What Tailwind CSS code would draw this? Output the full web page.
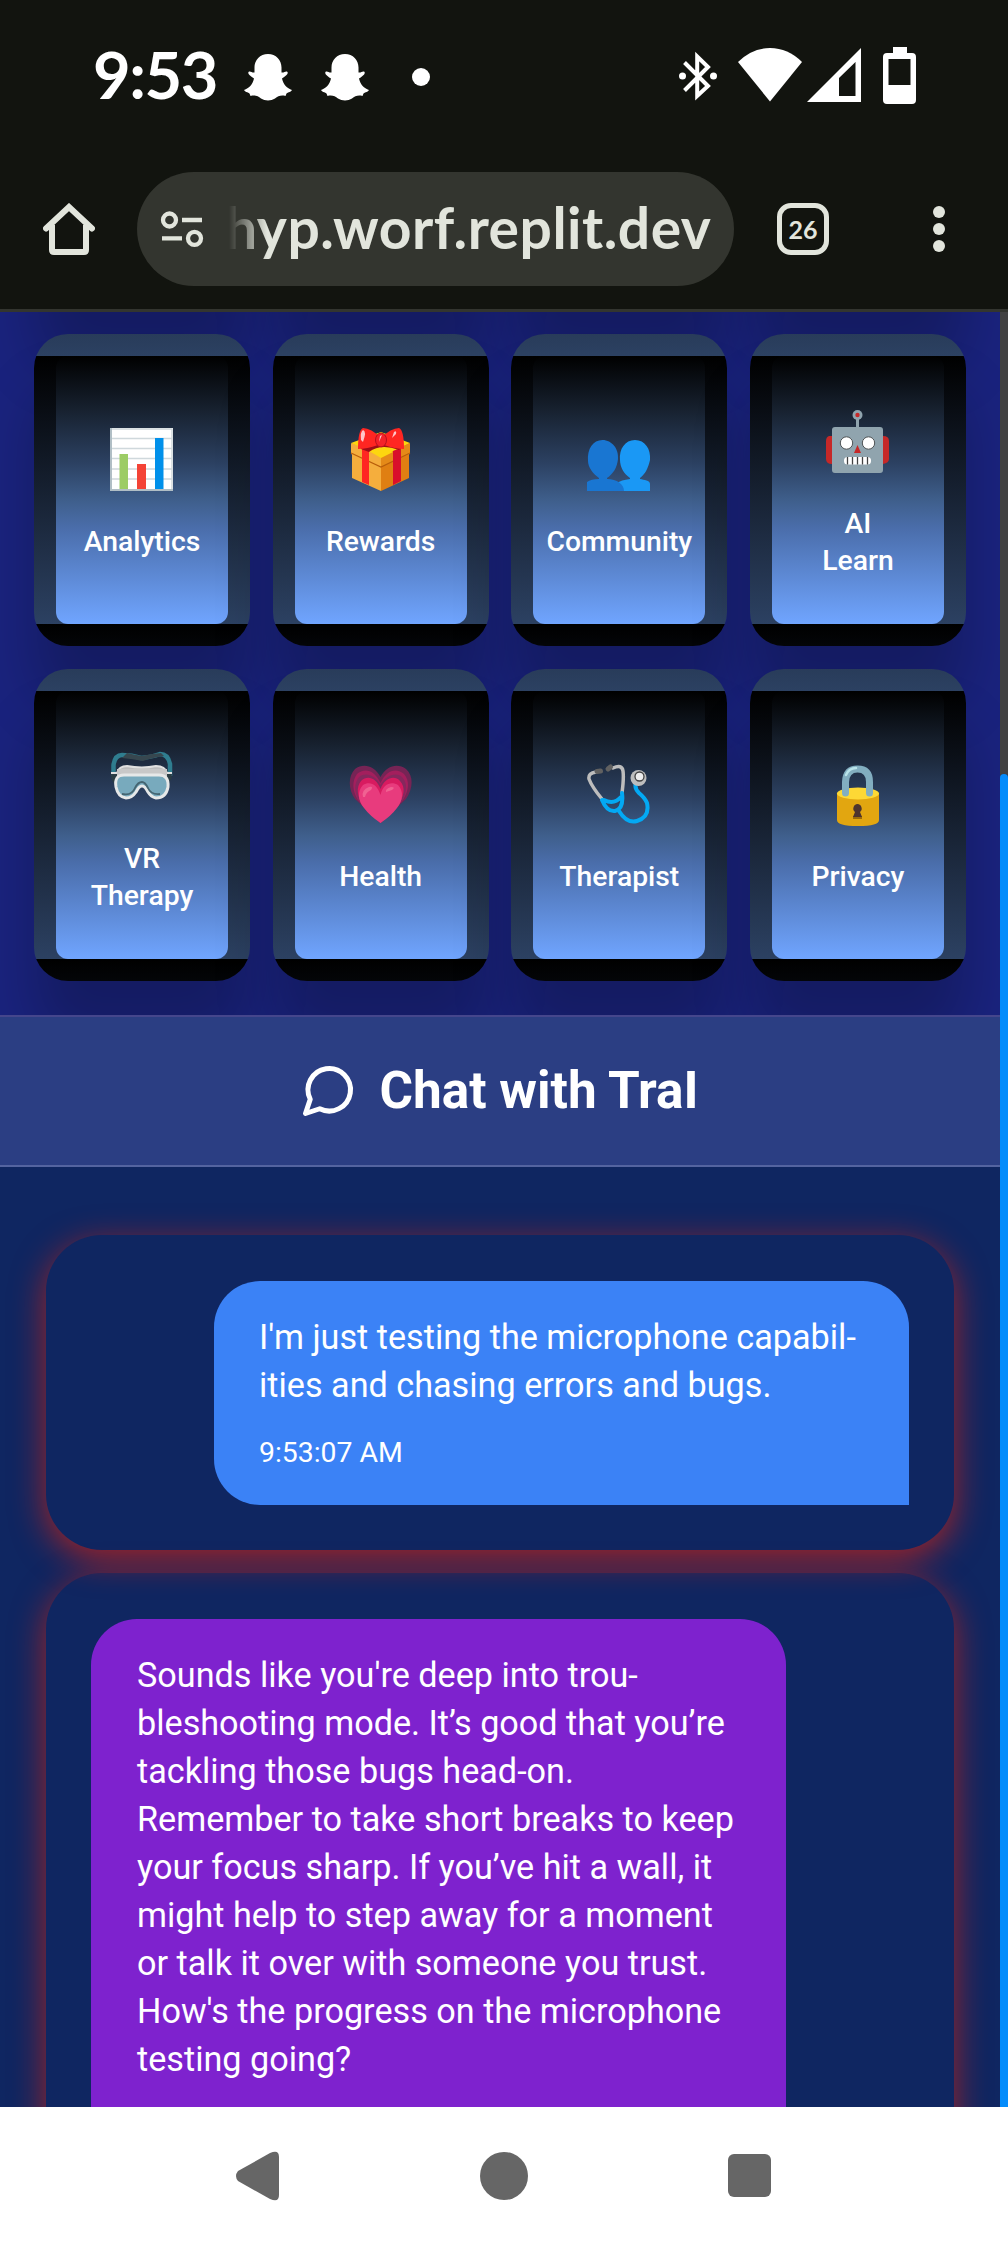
<!DOCTYPE html>
<html lang="en">
<head>
<meta charset="utf-8">
<title>Chat with TraI</title>
<script src="https://cdn.jsdelivr.net/npm/@tailwindcss/browser@4"></script>
</head>
<body class="flex h-[2244px] w-[1008px] flex-col overflow-hidden bg-white font-['Roboto',sans-serif] text-white">

<header class="h-[312px] shrink-0 border-b-[3px] border-[#33352f] bg-[#12140f]">
  <!-- status bar -->
  <div class="flex h-[150px] items-center pt-[4px] pl-[93px]">
    <span class="-mt-[6px] w-[151px] font-['Lato',sans-serif] text-[65px] leading-none font-bold tracking-[-1.500px] whitespace-nowrap">9:53</span>
    <svg class="h-[47px] w-[48px] shrink-0" viewBox="0 0 48 47" fill="#fff"><path id="ghost" d="M24 0C32 0 37.500 6 37.500 13.500V18.500C40 19 41 17 43 17.500C45 19 43 21.500 38 24.500C39.500 31 43 34 48 36C47 38 44.500 38 42.500 39.500L41.500 42C37 41 34 42 31 44.500C27 47 21 47 17 44.500C14 42 11 41 6.500 42L5.500 39.500C3.500 38 1 38 0 36C5 34 8.500 31 10 24.500C5 21.500 3 19 5 17.500C7 17 8 19 10.500 18.500V13.500C10.500 6 16 0 24 0Z"/></svg>
    <svg class="ml-[29px] h-[47px] w-[48px] shrink-0" viewBox="0 0 48 47" fill="#fff"><use href="#ghost"/></svg>
    <span class="ml-[43px] size-[18px] rounded-full bg-white"></span>
    <svg class="-mt-[2px] ml-[249px] h-[60px] w-[240px] shrink-0" viewBox="679 46 240 60" fill="#fff">
      <g transform="translate(0 1)">
        <path d="M684.500 61.500L708 85L697.200 95V55.500L708 66L684.500 89.500" fill="none" stroke="#fff" stroke-width="4"/>
        <circle cx="682.500" cy="75" r="3.500"/><circle cx="713.500" cy="75" r="3.500"/>
      </g>
      <path d="M738 62Q752 48 770 48T802 62L770 101.500Z"/>
      <path fill-rule="evenodd" d="M807 102L861 48V102ZM839 78V96H855.500V62Z"/>
      <path fill-rule="evenodd" d="M893 47H907V53H912Q916 53 916 57V100Q916 104 912 104H887Q883 104 883 100V57Q883 53 887 53H893ZM888.500 59V85H910.500V59Z"/>
    </svg>
  </div>
  <!-- browser toolbar -->
  <div class="flex h-[158px] items-center text-[#e2e5dc]">
    <svg class="ml-[43px] h-[52px] w-[52px]" viewBox="0 0 52 52" fill="none" stroke="#e2e5dc" stroke-width="6" stroke-linecap="round" stroke-linejoin="round"><path d="M3 25.500L26 4L49 25.500" stroke-linejoin="miter"/><path d="M9 22V47Q9 49 11 49H41Q43 49 43 47V22" stroke-linecap="butt"/></svg>
    <div class="ml-[42px] flex h-[114px] w-[597px] items-center rounded-full bg-[#33352f] pl-[23px]">
      <svg class="h-[38px] w-[44px] shrink-0" viewBox="0 0 44 38" fill="none" stroke="#e2e5dc" stroke-width="4.300"><circle cx="9.500" cy="10" r="6.500"/><path d="M22 10H42M2 28.300H22"/><circle cx="34.500" cy="28.300" r="6.500"/></svg>
      <div class="-mt-[4px] ml-[25px] w-[490px] [mask-image:linear-gradient(to_right,transparent,black_38px)]">
        <span class="-ml-[4px] block font-['Lato',sans-serif] text-[57px] leading-[80px] font-bold tracking-[0.5px] whitespace-nowrap">hyp.worf.replit.dev</span>
      </div>
    </div>
    <div class="ml-[43px] flex size-[52px] items-center justify-center rounded-[14px] border-[5.500px] border-[#e2e5dc] font-['Lato',sans-serif] text-[25px] leading-none font-bold">26</div>
    <div class="ml-[104px] flex flex-col gap-[5px]">
      <span class="size-3 rounded-full bg-[#e2e5dc]"></span>
      <span class="size-3 rounded-full bg-[#e2e5dc]"></span>
      <span class="size-3 rounded-full bg-[#e2e5dc]"></span>
    </div>
  </div>
</header>

<div class="flex h-[1795px] shrink-0">
  <main class="flex w-[1000px] flex-col overflow-hidden">
    <section class="h-[703px] shrink-0 overflow-hidden bg-[#1a237e]">
      <div id="tiles" class="-mt-[313px] grid grid-cols-[216px_216px_216px_216px] gap-x-[22.670px] gap-y-[23px] pl-[34px]"></div>
    </section>

    <div class="flex h-[152px] shrink-0 items-center justify-center gap-[21px] border-t-2 border-b-2 border-t-[#45468c] border-b-[#5464a0] bg-[#2b3e83] pr-[3px]">
      <svg class="size-[60px]" viewBox="0 0 24 24" fill="none" stroke="#fff" stroke-width="2" stroke-linecap="round" stroke-linejoin="round"><path d="m3 21 1.900-5.700a8.500 8.500 0 1 1 3.800 3.800z"/></svg>
      <h1 class="text-[51.300px] leading-none font-bold whitespace-nowrap">Chat with TraI</h1>
    </div>

    <section class="flex h-[940px] shrink-0 flex-col gap-[23px] overflow-hidden bg-[#0f2661] px-[46px] pt-[68px]">
      <article class="flex h-[315px] shrink-0 justify-end rounded-[56px] pt-[46px] pr-[45px] shadow-[0_9px_34px_rgba(255,34,0,0.62)]">
        <div class="h-[224px] w-[695px] rounded-[46px] rounded-br-none bg-[#3b82f6] pt-[32px] pl-[45px]">
          <p class="text-[34.200px] leading-[48px] whitespace-nowrap">I'm just testing the microphone capabil-<br>ities and chasing errors and bugs.</p>
          <p class="mt-[26px] text-[28.400px] leading-[36px]">9:53:07 AM</p>
        </div>
      </article>
      <article class="h-[720px] shrink-0 rounded-[56px] pt-[46px] pl-[45px] shadow-[0_9px_34px_rgba(255,34,0,0.62)]">
        <div class="h-[600px] w-[695px] rounded-[46px] bg-[#7e22ce] pt-[32px] pl-[46px]">
          <p class="text-[34.200px] leading-[48px] whitespace-nowrap">Sounds like you're deep into trou-<br>bleshooting mode. It’s good that you’re<br>tackling those bugs head-on.<br>Remember to take short breaks to keep<br>your focus sharp. If you’ve hit a wall, it<br>might help to step away for a moment<br>or talk it over with someone you trust.<br>How's the progress on the microphone<br>testing going?</p>
        </div>
      </article>
    </section>
  </main>
  <div class="flex w-2 flex-col bg-gradient-to-b from-[#424242] to-[#0f2661]">
    <div class="h-[462px] bg-[#424242]"></div>
    <div class="flex-1 rounded-t-full bg-[#058cfb]"></div>
  </div>
</div>

<!-- system navigation -->
<nav class="flex h-[137px] items-center bg-white">
  <svg class="ml-[235px] h-[50px] w-[45px]" viewBox="0 0 45 50" fill="#666"><path d="M3 20L35 2Q44 -2 44 6V44Q44 52 35 48L3 30Q-1 25 3 20Z"/></svg>
  <span class="ml-[200px] size-[48px] rounded-full bg-[#666]"></span>
  <span class="ml-[200px] size-[43px] rounded-[6px] bg-[#666]"></span>
</nav>

<!-- tile artwork -->
<template id="art">
  <svg viewBox="0 0 64 64"><path fill="#fff" d="M0 0H63V63H0Z"/><path d="M1 1H62V62M1 10.500H62M1 20.500H62M1 30.500H62M1 41H62M1 51H62" fill="none" stroke="#cfd8dc" stroke-width="1.500"/><path d="M1 0V62H63" fill="none" stroke="#b0bec5" stroke-width="2"/><path fill="#9ccc65" d="M9.500 26H18V61H9.500Z"/><path fill="#f44336" d="M27 36H36V61H27Z"/><path fill="#0090ea" d="M45 10H53.500V61H45Z"/></svg>
  <svg viewBox="0 0 64 64"><path fill="#f5ae3d" d="M3 15L32 28V63L3 50Z"/><path fill="#e07f12" d="M32 28L60 15V50L32 63Z"/><path fill="#fdd60f" d="M2 15L32 4L61 15L32 29Z"/><path fill="#f5ae3d" d="M2 15L32 29V39L2 26Z"/><path fill="#e58a18" d="M32 29L61 15V26L32 39Z"/><path d="M2 25L32 39L61 25" fill="none" stroke="#b85e0b" stroke-width="1.200"/><path fill="#ff2622" d="M13 20L20 23V57L13 54Z"/><path fill="#d90f2b" d="M44 23L52 20V53L44 57Z"/><path fill="#9f0d18" d="M12 19Q32 10 53 19L50 22Q32 15 20 24L12 21Z"/><path fill="#fdd60f" d="M22 24L32 19L44 24L32 30Z"/><path fill="#ff2622" d="M32 10Q22 0 14 0Q9 2 9 21Q18 21 29 17ZM32 10Q42 0 50 0Q55 2 55 21Q46 21 35 17Z"/><ellipse cx="32" cy="12" rx="5.500" ry="7" fill="#f4222a" stroke="#b80f1d"/><path fill="#ffc5c8" d="M14 2Q18 3 14 14L12 12Q11 4 14 2ZM45 4Q48 2 47 6L43 10ZM31 8L33 7L30 14Z"/></svg>
  <svg viewBox="0 0 64 64"><path fill="#1a98f5" d="M48 12C58 12 64 21 63 32C61 41 58 46 53 50V51C57 52 63 52 63 56V63H30V55Q34 52 43 51V50C37 46 33 39 33 32C32 21 38 12 48 12Z"/><path fill="#1976d2" d="M15.500 12C25 12 32 21 31 31C30 40 26 46 20 50V51C30 51 37 56 37 63H0V54Q4 51 12 51V50C6 46 1 39 1 33C0 21 6 12 15.500 12Z"/></svg>
  <svg viewBox="0 0 64 64"><path fill="#c62828" d="M6 26H3Q0 27 0 31V49Q0 54 6 54H57Q63 53 63 49V31Q63 26 57 26Z"/><circle cx="31.500" cy="5" r="5" fill="#90a4ae"/><circle cx="31.500" cy="5" r="2.200" fill="#c62828"/><path fill="#90a4ae" d="M30 9H33V17H54Q57 17 57 20V60Q57 63 54 63H9Q6 63 6 60V20Q6 17 9 17H30Z"/><circle cx="20.500" cy="33" r="6.200" fill="#fff" stroke="#4d5254"/><circle cx="42.500" cy="33" r="6.200" fill="#fff" stroke="#4d5254"/><path fill="#c62828" d="M31.500 35L35 43H28Z"/><rect x="18" y="47" width="27" height="7.500" rx="3.500" fill="#fff"/><path d="M21.500 47V54.500M26.500 47V54.500M31.500 47V54.500M36.500 47V54.500M41.500 47V54.500" stroke="#424242" stroke-width="1.300"/></svg>
  <svg viewBox="0 0 64 64"><path d="M3.500 31V20Q5 10 12 10Q22 10 31 13Q42 12 50 9Q58 9 60 19V31" fill="none" stroke="#2f7d8f" stroke-width="4.500"/><path fill="#37474f" d="M17 8Q25 10 32 11Q40 9 51 8L54 11Q41 13 33 16Q23 14 12 13Z"/><path fill="#2b3d44" d="M1 28H9V40Q1 40 1 28ZM62 28H54V40Q62 38 62 28Z"/><path d="M1 28H7Q9 21 17 21Q32 24 46 21Q55 21 57 28H62" fill="#bdbdbd" stroke="#e0e0e0" stroke-width="2"/><path fill="#c8c8c8" d="M7 24H57V38H7Z"/><path d="M6 42Q4 30 14 30H49Q59 30 58 42Q56 53 46 53Q41 52 38 47Q35 41 32 41Q29 41 26 47Q22 53 16 53Q8 52 6 42Z" fill="#78aabd" stroke="#e6e8e8" stroke-width="3"/><path d="M12 49Q22 51 25 43Q28 37 32 37Q35 37 38 43Q41 50 50 49" fill="none" stroke="#456571" stroke-width="1.800"/></svg>
  <svg viewBox="0 0 64 64"><path fill="#762455" d="M31.500 14C38 2 49 0 57 6C65 13 64 26 57 36L31.500 60L6 36C-1 26-1 13 6 6C14 0 25 2 31.500 14Z"/><path fill="#a31f5d" d="M31.500 20C38 6 48 5 55 11C61 18 60 27 54 37L31.500 60L9 37C3 27 3 18 8 11C15 5 25 6 31.500 20Z"/><path fill="#85285d" d="M31.500 22C37 12 47 9 53 14C59 20 58 30 53 38L31.500 60L10 38C5 30 5 20 10 14C17 9 26 12 31.500 22Z"/><path fill="#d81b60" d="M31.500 26C36 14 46 12 51 18C57 24 55 34 49 42L31.500 60L14 42C8 34 7 24 12 18C18 12 27 14 31.500 26Z"/><path fill="#e83b7d" d="M31.500 32C34 20 43 18 49 22C55 28 54 38 48 45Q42 53 31.500 60Q21 53 15 45C9 38 8 28 14 22C20 18 28 20 31.500 32Z"/><path fill="#f06292" d="M14 34Q12 27 20 24Q25 23 22 27Q17 29 16 34ZM37 29Q36 26 42 24Q47 24 43 27Z"/></svg>
  <svg viewBox="0 0 64 64" fill="none" stroke-linecap="round"><path d="M9 9Q1 10 2 16Q5 24 15 36M26 5Q35 1 36 8Q37 15 35 30" stroke="#bdbdbd" stroke-width="3.500"/><path d="M10 8.500L13.500 8M21 6L23.500 4" stroke="#616161" stroke-width="5"/><path d="M15 37Q20 49 28 48Q37 46 35 30M17 37Q27 42 34 34M32 48Q40 61 50 58Q63 54 60 40Q58 35 52 30Q46 24 50 17" stroke="#03a9f4" stroke-width="4"/><circle cx="51.500" cy="15" r="8" fill="#bdbdbd"/><circle cx="52.500" cy="13.500" r="4.500" fill="#eee" stroke="#424242" stroke-width="1.300"/></svg>
  <svg viewBox="0 0 64 64"><path fill="#e2a610" d="M11 30H53V57Q53 63 32 63Q11 63 11 57Z"/><ellipse cx="32" cy="30.500" rx="21" ry="6" fill="#fdd835"/><path d="M19.500 30V19Q20 6 31.500 6Q43.500 6 43.500 19V30" fill="none" stroke="#82aec0" stroke-width="7" stroke-linecap="round"/><path d="M20 12Q23 5 30 5" fill="none" stroke="#b9e4ea" stroke-width="2.500" stroke-linecap="round"/><path fill="#9a6b0b" d="M27 53H36V56H27Z"/><path fill="#4e342e" d="M31.500 41A4.500 4.500 0 0 1 34 49L36 54H27L29 49A4.500 4.500 0 0 1 31.500 41Z"/></svg>
</template>

<script>
  const labels = ["Analytics", "Rewards", "Community", "AI<br>Learn", "VR<br>Therapy", "Health", "Therapist", "Privacy"];
  const art = document.getElementById("art").content.children;
  const grid = document.getElementById("tiles");
  const card = "h-[312px] rounded-[34px] border-[22px] border-transparent bg-[linear-gradient(to_bottom,#000,#2c4162)] shadow-[0_57px_57px_0_rgba(0,0,0,0.22)]";
  // row scrolled out of view above the visible tiles
  for (let i = 0; i < 4; i++) {
    const d = document.createElement("div");
    d.className = card;
    grid.append(d);
  }
  labels.forEach((label, i) => {
    const d = document.createElement("div");
    // each tile paints above the shadows of its neighbours
    d.className = card + (i === 0 ? "" : " relative");
    d.innerHTML = `<div class="flex h-full flex-col items-center justify-center rounded-[12px] bg-[linear-gradient(to_bottom,#000,#17212f_20%,#2c4162_40%,#3f5f8c_54%,#4a6daa_64%,#70a5ff)] pt-[8px]"><div class="art size-[64px]"></div><p class="mt-[31px] text-center text-[28.300px] leading-[37px] font-medium">${label}</p></div>`;
    d.querySelector(".art").append(art[i].cloneNode(true));
    grid.append(d);
  });
</script>
</body>
</html>
